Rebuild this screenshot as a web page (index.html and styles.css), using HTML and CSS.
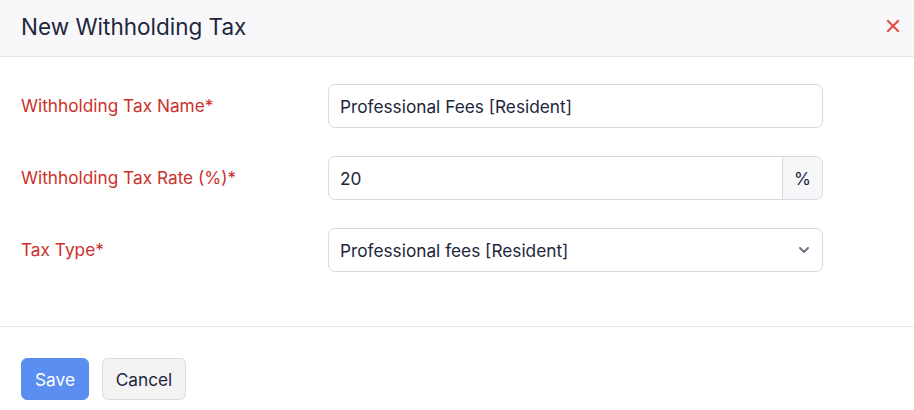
FILE: index.html
```html
<!DOCTYPE html>
<html>
<head>
<meta charset="utf-8">
<link rel="stylesheet" href="styles.css">
</head>
<body>
<div class="modal">
  <div class="header">
    <h1 class="title">New Withholding Tax</h1>
    <span class="close" aria-label="Close">
      <svg width="14" height="14" viewBox="0 0 14 14"><path d="M2 2 L12 12 M12 2 L2 12" stroke="#e5483e" stroke-width="2" stroke-linecap="square"/></svg>
    </span>
  </div>
  <div class="body">
    <div class="row">
      <label class="label">Withholding Tax Name*</label>
      <div class="field"><span class="value">Professional Fees [Resident]</span></div>
    </div>
    <div class="row">
      <label class="label">Withholding Tax Rate (%)*</label>
      <div class="field group"><span class="value">20</span><span class="addon">%</span></div>
    </div>
    <div class="row">
      <label class="label">Tax Type*</label>
      <div class="field select"><span class="value">Professional fees [Resident]</span>
        <svg class="chev" width="12" height="8" viewBox="0 0 12 8"><path d="M2 2 L6 6 L10 2" fill="none" stroke="#707080" stroke-width="2" stroke-linecap="round" stroke-linejoin="round"/></svg>
      </div>
    </div>
  </div>
  <div class="footer">
    <button class="btn primary">Save</button>
    <button class="btn secondary">Cancel</button>
  </div>
</div>
</body>
</html>
```
FILE: styles.css
```css
* { box-sizing: border-box; }
html, body { margin: 0; padding: 0; background: #fff; }
body { font-family: Inter, "Noto Sans", sans-serif; color: #21263c; width: 914px; height: 410px; overflow: hidden; }
.header {
  height: 57px;
  background: #f8f8fa;
  border-bottom: 1px solid #e6e6ea;
  display: flex;
  align-items: center;
  justify-content: space-between;
  padding: 0 14px 0 21px;
}
.title { margin: 0; font-size: 22.5px; font-weight: 400; color: #21263c; line-height: 1; padding-bottom: 2px; }
.close { display: flex; padding-bottom: 4px; }
.body { padding: 27px 21px 54px; display: flex; flex-direction: column; gap: 28px; border-bottom: 1px solid #e6e6ea; }
.row { display: flex; align-items: center; }
.label { width: 307px; color: #cb312c; font-size: 17.25px; padding-bottom: 2px; }
.field {
  width: 495px;
  height: 44px;
  border: 1px solid #d9d9e3;
  border-radius: 7px;
  display: flex;
  align-items: center;
  padding: 0 11px;
  font-size: 17.25px;
  color: #21263c;
}
.group { padding-right: 0; overflow: hidden; }
.group .value { flex: 1; }
.addon {
  width: 40px;
  height: 100%;
  background: #f7f7f9;
  border-left: 1px solid #d9d9e3;
  display: flex;
  align-items: center;
  justify-content: center;
  font-size: 17.25px;
}
.select { justify-content: space-between; padding-right: 12px; }
.footer { padding: 31px 21px 0; display: flex; gap: 13px; }
.btn {
  font-family: Inter, "Noto Sans", sans-serif;
  font-size: 17.25px;
  height: 42px;
  border-radius: 6px;
  padding: 0;
  cursor: pointer;
}
.primary { background: #5a8ef1; color: #fff; border: 1px solid #5a8ef1; width: 68px; }
.secondary { background: #f3f3f4; color: #21263c; border: 1px solid #dadadf; width: 84px; }
```
